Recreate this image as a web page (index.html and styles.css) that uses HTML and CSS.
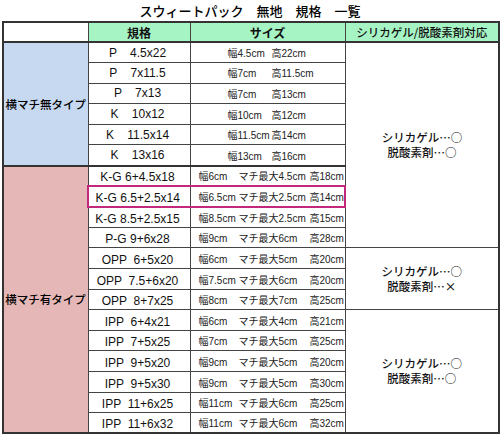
FILE: index.html
```html
<!DOCTYPE html>
<html lang="ja">
<head>
    <meta charset="UTF-8">
    <meta name="viewport" content="width=device-width, initial-scale=1.0">
    <title>スウィートパック 無地 規格 一覧</title>
    <link rel="stylesheet" href="styles.css">
</head>
<body>
    <!-- 見出し -->
    <h1 class="title">スウィートパック　無地　規格　一覧</h1>

    <table class="spec">
        <colgroup>
            <col class="col-type">
            <col class="col-code">
            <col class="col-size">
            <col class="col-note">
        </colgroup>
        <thead>
            <tr>
                <th class="blank"></th>
                <th class="head">規格</th>
                <th class="head">サイズ</th>
                <th class="head head-light">シリカゲル/脱酸素剤対応</th>
            </tr>
        </thead>
        <tbody>
            <!-- 横マチ無タイプ -->
            <tr class="flat">
                <td class="type type-flat" rowspan="6">横マチ無タイプ</td>
                <td class="code">P    4.5x22</td>
                <td class="size"><span class="w">幅4.5cm</span><span>高22cm</span></td>
                <td class="note" rowspan="10">シリカゲル…○<br>脱酸素剤…○</td>
            </tr>
            <tr class="flat">
                <td class="code">P    7x11.5</td>
                <td class="size"><span class="w">幅7cm</span><span>高11.5cm</span></td>
            </tr>
            <tr class="flat">
                <td class="code">P    7x13</td>
                <td class="size"><span class="w">幅7cm</span><span>高13cm</span></td>
            </tr>
            <tr class="flat">
                <td class="code">K    10x12</td>
                <td class="size"><span class="w">幅10cm</span><span>高12cm</span></td>
            </tr>
            <tr class="flat">
                <td class="code">K    11.5x14</td>
                <td class="size"><span class="w">幅11.5cm</span><span>高14cm</span></td>
            </tr>
            <tr class="flat">
                <td class="code">K    13x16</td>
                <td class="size"><span class="w">幅13cm</span><span>高16cm</span></td>
            </tr>

            <!-- 横マチ有タイプ -->
            <tr class="gusset group-start">
                <td class="type type-gusset" rowspan="13">横マチ有タイプ</td>
                <td class="code">K-G 6+4.5x18</td>
                <td class="size"><span class="w">幅6cm</span><span class="m">マチ最大4.5cm</span><span>高18cm</span></td>
            </tr>
            <tr class="gusset mark">
                <td class="code">K-G 6.5+2.5x14</td>
                <td class="size"><span class="w">幅6.5cm</span><span class="m">マチ最大2.5cm</span><span>高14cm</span></td>
            </tr>
            <tr class="gusset">
                <td class="code">K-G 8.5+2.5x15</td>
                <td class="size"><span class="w">幅8.5cm</span><span class="m">マチ最大2.5cm</span><span>高15cm</span></td>
            </tr>
            <tr class="gusset">
                <td class="code">P-G 9+6x28</td>
                <td class="size"><span class="w">幅9cm</span><span class="m">マチ最大6cm</span><span>高28cm</span></td>
            </tr>
            <tr class="gusset">
                <td class="code">OPP  6+5x20</td>
                <td class="size"><span class="w">幅6cm</span><span class="m">マチ最大5cm</span><span>高20cm</span></td>
                <td class="note" rowspan="3">シリカゲル…○<br>脱酸素剤…×</td>
            </tr>
            <tr class="gusset">
                <td class="code">OPP  7.5+6x20</td>
                <td class="size"><span class="w">幅7.5cm</span><span class="m">マチ最大6cm</span><span>高20cm</span></td>
            </tr>
            <tr class="gusset">
                <td class="code">OPP  8+7x25</td>
                <td class="size"><span class="w">幅8cm</span><span class="m">マチ最大7cm</span><span>高25cm</span></td>
            </tr>
            <tr class="gusset">
                <td class="code">IPP  6+4x21</td>
                <td class="size"><span class="w">幅6cm</span><span class="m">マチ最大4cm</span><span>高21cm</span></td>
                <td class="note" rowspan="6">シリカゲル…○<br>脱酸素剤…○</td>
            </tr>
            <tr class="gusset">
                <td class="code">IPP  7+5x25</td>
                <td class="size"><span class="w">幅7cm</span><span class="m">マチ最大5cm</span><span>高25cm</span></td>
            </tr>
            <tr class="gusset">
                <td class="code">IPP  9+5x20</td>
                <td class="size"><span class="w">幅9cm</span><span class="m">マチ最大5cm</span><span>高20cm</span></td>
            </tr>
            <tr class="gusset">
                <td class="code">IPP  9+5x30</td>
                <td class="size"><span class="w">幅9cm</span><span class="m">マチ最大5cm</span><span>高30cm</span></td>
            </tr>
            <tr class="gusset">
                <td class="code">IPP  11+6x25</td>
                <td class="size"><span class="w">幅11cm</span><span class="m">マチ最大6cm</span><span>高25cm</span></td>
            </tr>
            <tr class="gusset">
                <td class="code">IPP  11+6x32</td>
                <td class="size"><span class="w">幅11cm</span><span class="m">マチ最大6cm</span><span>高32cm</span></td>
            </tr>
        </tbody>
    </table>
</body>
</html>
```

FILE: styles.css
```css
* {
    padding: 0;
    margin: 0;
    box-sizing: border-box;
}

body {
    background-color: #fff;
    color: #111;
    font-family: "Liberation Sans", "Noto Sans CJK JP", sans-serif;
}

.title {
    height: 21px;
    font-family: "Noto Sans CJK JP", sans-serif;
    font-size: 13px;
    font-weight: 500;
    line-height: 21px;
    text-align: center;
    color: #000;
}

.spec {
    margin-left: 2px;
    width: 496px;
    table-layout: fixed;
    border-collapse: collapse;
    border: 2px solid #333;
}

.col-type { width: 85px; }
.col-code { width: 102px; }
.col-size { width: 155px; }
.col-note { width: 154px; }

th,
td {
    border: 1px solid #444;
    padding: 0;
    white-space: pre;
}

/* 見出し行 */
thead tr {
    height: 20px;
}

.head {
    background-color: #a6f3c4;
    font-size: 12px;
    font-weight: bold;
    text-align: center;
    border-bottom: 2px solid #333;
}

.head-light {
    font-family: "Noto Sans CJK JP", sans-serif;
    font-size: 11.5px;
    font-weight: 500;
}

.blank {
    background-color: #fff;
    border-bottom: 2px solid #333;
}

tbody tr {
    height: 20.6px;
}

.type {
    font-family: "Noto Sans CJK JP", sans-serif;
    font-size: 11.5px;
    font-weight: 500;
    text-align: center;
    vertical-align: middle;
    color: #000;
}

.type-flat {
    background-color: #c6d9f0;
}

.type-gusset {
    background-color: #e5b8b7;
}

.code {
    padding-right: 3px;
    font-size: 12px;
    text-align: center;
    vertical-align: middle;
}

.size {
    font-size: 10px;
    vertical-align: middle;
    color: #222;
}

.flat .size {
    padding-left: 37px;
}

.flat .size .w {
    display: inline-block;
    width: 44px;
}

.gusset .size {
    padding-left: 8px;
}

.gusset .size .w {
    display: inline-block;
    width: 40px;
}

.gusset .size .m {
    display: inline-block;
    width: 71px;
}

/* マチ有は下寄せ */
.gusset .code,
.gusset .size {
    vertical-align: bottom;
    line-height: 14px;
    padding-bottom: 1px;
}

.note {
    font-family: "Noto Sans CJK JP", sans-serif;
    font-size: 11.5px;
    font-weight: 500;
    line-height: 15px;
    text-align: center;
    vertical-align: middle;
    color: #111;
}

.group-start td {
    border-top: 2px solid #333;
}

/* 赤枠の行 */
.mark .code {
    border: 2px solid #c2297c;
    border-right: 1px solid #444;
}

.mark .size {
    border: 2px solid #c2297c;
    border-left: 1px solid #444;
}
```
